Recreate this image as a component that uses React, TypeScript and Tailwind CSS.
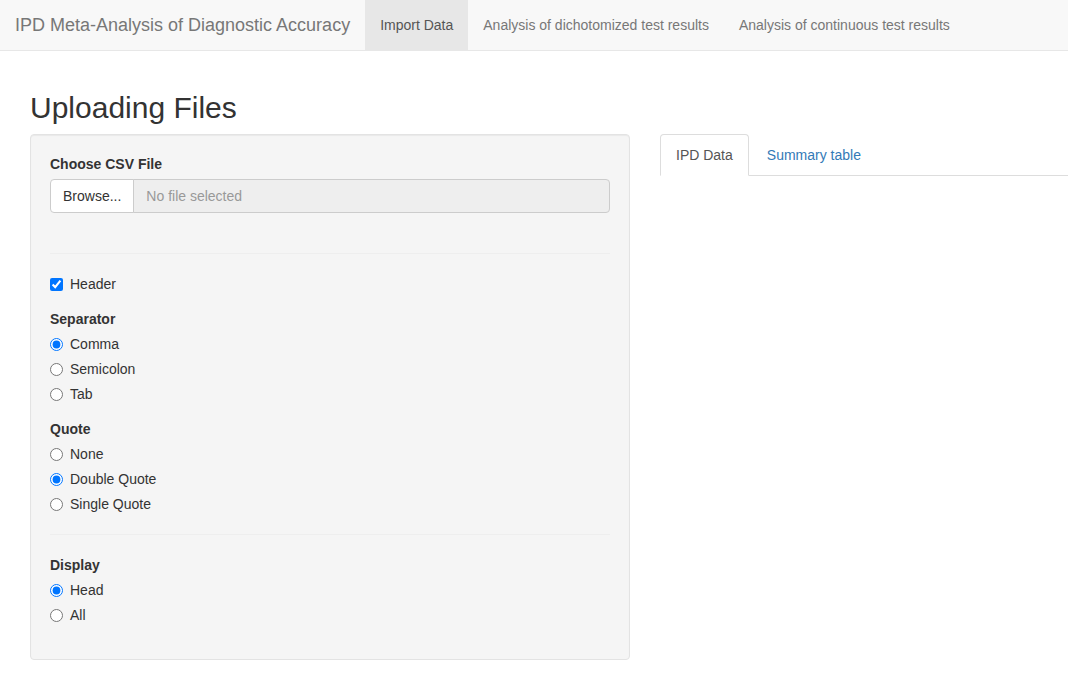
import { useState } from 'react'

/* ── Navbar ─────────────────────────────────────────────── */
const NAV_ITEMS = [
  'Import Data',
  'Analysis of dichotomized test results',
  'Analysis of continuous test results',
]

function Navbar() {
  return (
    <nav className="flex h-[51px] bg-[#f8f8f8] border-b border-[#e7e7e7]">
      <div className="px-[15px] py-[15px] text-[18px] leading-5 text-[#777]">
        IPD Meta-Analysis of Diagnostic Accuracy
      </div>
      <ul className="flex">
        {NAV_ITEMS.map((item, i) => (
          <li
            key={item}
            className={`px-[15px] py-[15px] leading-5 text-[14px] ${
              i === 0 ? 'bg-[#e7e7e7] text-[#555]' : 'text-[#777]'
            }`}
          >
            {item}
          </li>
        ))}
      </ul>
    </nav>
  )
}

/* ── Radio group (bootstrap .radio) ─────────────────────── */
function RadioGroup({
  label,
  name,
  options,
  initial,
}: {
  label: string
  name: string
  options: string[]
  initial: string
}) {
  const [value, setValue] = useState(initial)
  return (
    <div className="flex flex-col">
      <div className="h-5 leading-5 font-bold">{label}</div>
      <div className="mt-[5px] flex flex-col gap-[5px]">
        {options.map((opt) => (
          <label key={opt} className="flex items-center h-5 leading-5 gap-[7px]">
            <input
              type="radio"
              name={name}
              checked={value === opt}
              onChange={() => setValue(opt)}
              className="m-0 w-[13px] h-[13px]"
            />
            <span>{opt}</span>
          </label>
        ))}
      </div>
    </div>
  )
}

/* ── Sidebar well ───────────────────────────────────────── */
function UploadWell() {
  const [header, setHeader] = useState(true)
  return (
    <div className="w-[600px] shrink-0 bg-[#f5f5f5] border border-[#e3e3e3] rounded-[4px] shadow-[inset_0_1px_1px_rgba(0,0,0,0.05)] px-[19px] pt-[19px] pb-[34px]">
      <div className="h-5 leading-5 font-bold">Choose CSV File</div>
      <div className="mt-[5px] flex h-[34px]">
        <div className="flex items-center px-3 bg-white border border-[#ccc] rounded-l-[4px] text-[#333]">
          Browse...
        </div>
        <div className="flex-1 flex items-center px-3 -ml-px bg-[#eee] border border-[#ccc] rounded-r-[4px] text-[#999]">
          No file selected
        </div>
      </div>

      <div className="mt-[40px] border-t border-[#eee]" />

      <label className="mt-[20px] flex items-center h-5 leading-5 gap-[7px]">
        <input
          type="checkbox"
          checked={header}
          onChange={() => setHeader(!header)}
          className="m-0 w-[13px] h-[13px]"
        />
        <span>Header</span>
      </label>

      <div className="mt-[15px]">
        <RadioGroup
          label="Separator"
          name="sep"
          options={['Comma', 'Semicolon', 'Tab']}
          initial="Comma"
        />
      </div>
      <div className="mt-[15px]">
        <RadioGroup
          label="Quote"
          name="quote"
          options={['None', 'Double Quote', 'Single Quote']}
          initial="Double Quote"
        />
      </div>

      <div className="mt-[20px] border-t border-[#eee]" />

      <div className="mt-[20px]">
        <RadioGroup label="Display" name="disp" options={['Head', 'All']} initial="Head" />
      </div>
    </div>
  )
}

/* ── Tabs ───────────────────────────────────────────────── */
function Tabs() {
  return (
    <ul className="flex border-b border-[#ddd] h-[42px]">
      <li className="-mb-px mr-[2px] px-[15px] py-[10px] leading-5 bg-white text-[#555] border border-[#ddd] border-b-transparent rounded-t-[4px]">
        IPD Data
      </li>
      <li className="-mb-px mr-[2px] px-[15px] py-[10px] leading-5 text-[#337ab7] border border-transparent rounded-t-[4px]">
        Summary table
      </li>
    </ul>
  )
}

export default function App() {
  return (
    <div
      className="min-h-screen bg-white text-[14px] leading-5 text-[#333]"
      style={{ fontFamily: '"Liberation Sans", Arial, Helvetica, sans-serif' }}
    >
      <Navbar />
      <div className="pl-[30px] pt-[20px]">
        <h2 className="mt-[20px] mb-[10px] text-[30px] leading-[33px] font-medium text-[#333]">
          Uploading Files
        </h2>
        <div className="flex items-start">
          <UploadWell />
          <div className="ml-[30px] flex-1">
            <Tabs />
          </div>
        </div>
      </div>
    </div>
  )
}
